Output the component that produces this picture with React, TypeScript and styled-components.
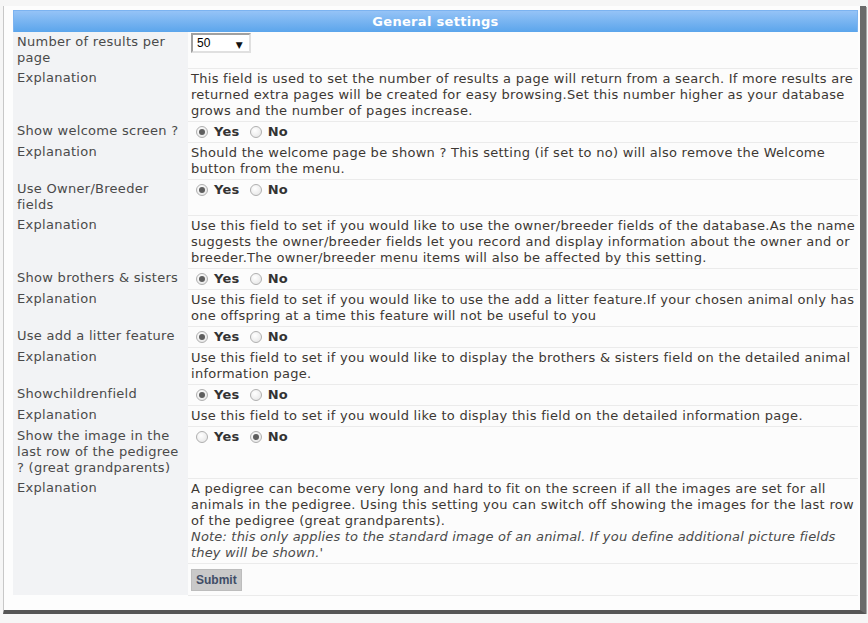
import React, { useState } from 'react';
import styled, { createGlobalStyle } from 'styled-components';

type Setting = {
    id: string;
    label: string;
    value: 'yes' | 'no';
    explanation: string;
};

const settings: Setting[] = [
    {
        id: 'welcome',
        label: 'Show welcome screen ?',
        value: 'yes',
        explanation: 'Should the welcome page be shown ? This setting (if set to no) will also remove the Welcome button from the menu.',
    },
    {
        id: 'owner',
        label: 'Use Owner/Breeder fields',
        value: 'yes',
        explanation: 'Use this field to set if you would like to use the owner/breeder fields of the database.As the name suggests the owner/breeder fields let you record and display information about the owner and or breeder.The owner/breeder menu items will also be affected by this setting.',
    },
    {
        id: 'brothers',
        label: 'Show brothers & sisters',
        value: 'yes',
        explanation: 'Use this field to set if you would like to use the add a litter feature.If your chosen animal only has one offspring at a time this feature will not be useful to you',
    },
    {
        id: 'litter',
        label: 'Use add a litter feature',
        value: 'yes',
        explanation: 'Use this field to set if you would like to display the brothers & sisters field on the detailed animal information page.',
    },
    {
        id: 'children',
        label: 'Showchildrenfield',
        value: 'yes',
        explanation: 'Use this field to set if you would like to display this field on the detailed information page.',
    },
];

const GlobalStyle = createGlobalStyle`
body{
    margin: 0;
    background: #f6f6f6;
    font-family: "DejaVu Sans", Verdana, sans-serif;
}
`

const YesNo = ({ name, initial }: { name: string; initial: 'yes' | 'no' }) => {
    const [value, setValue] = useState(initial);
    return (
        <RadioGroup>
            <label>
                <Radio type='radio' name={name} checked={value === 'yes'} onChange={() => setValue('yes')} />
                <span>Yes</span>
            </label>
            <label>
                <Radio type='radio' name={name} checked={value === 'no'} onChange={() => setValue('no')} />
                <span>No</span>
            </label>
        </RadioGroup>
    );
};

const App = () => {
    return (
        <>
            <GlobalStyle />
            <Panel>
                <Header>General settings</Header>
                <Table>
                    <tbody>
                        <tr>
                            <Label>Number of results per page</Label>
                            <Value>
                                <SelectWrap>
                                    <select defaultValue='50'>
                                        <option>10</option>
                                        <option>25</option>
                                        <option>50</option>
                                        <option>100</option>
                                    </select>
                                    <span>▼</span>
                                </SelectWrap>
                            </Value>
                        </tr>
                        <tr>
                            <Label>Explanation</Label>
                            <Value>
                                This field is used to set the number of results a page will return from a search. If more results are returned extra pages will be created for easy browsing.Set this number higher as your database grows and the number of pages increase.
                            </Value>
                        </tr>
                        {settings.map(s => (
                            <React.Fragment key={s.id}>
                                <tr>
                                    <Label>{s.label}</Label>
                                    <Value><YesNo name={s.id} initial={s.value} /></Value>
                                </tr>
                                <tr>
                                    <Label>Explanation</Label>
                                    <Value>{s.explanation}</Value>
                                </tr>
                            </React.Fragment>
                        ))}
                        <tr>
                            <Label>Show the image in the last row of the pedigree ? (great grandparents)</Label>
                            <Value><YesNo name='lastrow' initial='no' /></Value>
                        </tr>
                        <tr>
                            <Label>Explanation</Label>
                            <Value>
                                A pedigree can become very long and hard to fit on the screen if all the images are set for all animals in the pedigree. Using this setting you can switch off showing the images for the last row of the pedigree (great grandparents).
                                <br />
                                <i>Note: this only applies to the standard image of an animal. If you define additional picture fields they will be shown.'</i>
                            </Value>
                        </tr>
                        <tr>
                            <Label></Label>
                            <Value $pad='5px 3px 4px'><SubmitButton type='button'>Submit</SubmitButton></Value>
                        </tr>
                    </tbody>
                </Table>
            </Panel>
        </>
    );
};

export default App;


const Panel = styled.div`
width: 863px;
margin: 6px 0 0 3px;
padding: 4px 2px 14px 9px;
box-sizing: border-box;
background: #fdfdfd;
border-left: 1px solid #c8c8c8;
border-right: 6px solid #6a6a6a;
border-bottom: 4px solid #555;
box-shadow: 1px 1px 0 #aaa;
`

const Header = styled.div`
height: 22px;
line-height: 22px;
text-align: center;
color: #fff;
font-weight: bold;
font-size: 13px;
letter-spacing: 0.3px;
background: linear-gradient(#95c3f6, #5ba5ec);
border: 1px solid #7cb3f0;
border-bottom: none;
box-sizing: border-box;
`

const Table = styled.table`
width: 100%;
border-collapse: collapse;
font-size: 13px;
letter-spacing: 0.28px;
line-height: 16px;
`

const Label = styled.td`
width: 175px;
box-sizing: border-box;
vertical-align: top;
padding: 2px 4px;
background: #f2f3f5;
color: #4a4a4a;
`

const Value = styled.td<{ $pad?: string }>`
vertical-align: top;
padding: ${p => p.$pad || '2px 3px'};
background: #fcfcfc;
color: #3d3833;
border-bottom: 1px solid #ebebeb;

i{
    color: #4a4a4a;
    letter-spacing: 0.18px;
}
`

const SelectWrap = styled.span`
position: relative;
display: inline-block;
margin-top: -1px;

select{
    appearance: none;
    width: 60px;
    height: 20px;
    padding: 0 0 0 4px;
    font-family: "Liberation Sans", Arial, sans-serif;
    font-size: 12px;
    letter-spacing: 0;
    color: #000;
    background: #fff;
    border: 2px solid #a0a0a0;
    border-right-color: #e0e0e0;
    border-bottom-color: #e0e0e0;
}

span{
    position: absolute;
    right: 8px;
    top: 4px;
    font-size: 9px;
    color: #111;
    pointer-events: none;
}
`

const RadioGroup = styled.div`
display: flex;
gap: 10px;
padding-left: 5px;

label{
    display: flex;
    align-items: center;
    gap: 6px;
}

span{
    font-weight: bold;
    font-size: 13px;
    color: #333;
}
`

const Radio = styled.input`
appearance: none;
margin: 0;
width: 12px;
height: 12px;
border-radius: 50%;
border: 1px solid #b0b0b0;
background: radial-gradient(circle at 40% 35%, #ffffff, #e2e2e2);
display: grid;
place-items: center;
cursor: pointer;

&:checked::after{
    content: '';
    width: 6px;
    height: 6px;
    border-radius: 50%;
    background: #5e5e5e;
}
`

const SubmitButton = styled.button`
font-family: "Liberation Sans", Arial, sans-serif;
font-weight: bold;
font-size: 12px;
color: #3f4d66;
background: #c9c9c9;
border: 1px solid #bdbdbd;
padding: 2px 4px;
height: 22px;
cursor: pointer;
`
